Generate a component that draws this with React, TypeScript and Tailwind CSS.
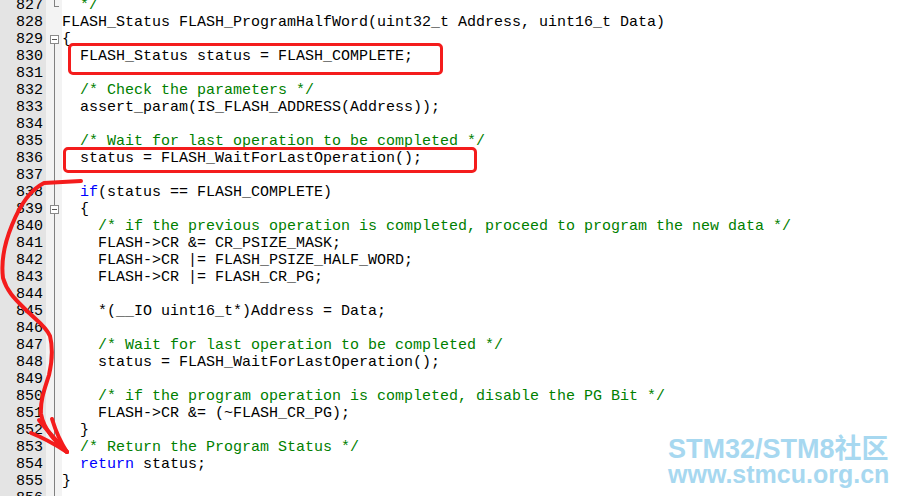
import React from 'react';

type Seg = { t: string; c?: 'k' | 'g' };

const lines: { n: number; segs: Seg[] }[] = [
  { n: 827, segs: [{ t: '  */', c: 'g' }] },
  { n: 828, segs: [{ t: 'FLASH_Status FLASH_ProgramHalfWord(uint32_t Address, uint16_t Data)' }] },
  { n: 829, segs: [{ t: '{' }] },
  { n: 830, segs: [{ t: '  FLASH_Status status = FLASH_COMPLETE;' }] },
  { n: 831, segs: [] },
  { n: 832, segs: [{ t: '  /* Check the parameters */', c: 'g' }] },
  { n: 833, segs: [{ t: '  assert_param(IS_FLASH_ADDRESS(Address));' }] },
  { n: 834, segs: [] },
  { n: 835, segs: [{ t: '  /* Wait for last operation to be completed */', c: 'g' }] },
  { n: 836, segs: [{ t: '  status = FLASH_WaitForLastOperation();' }] },
  { n: 837, segs: [] },
  { n: 838, segs: [{ t: '  ' }, { t: 'if', c: 'k' }, { t: '(status == FLASH_COMPLETE)' }] },
  { n: 839, segs: [{ t: '  {' }] },
  { n: 840, segs: [{ t: '    /* if the previous operation is completed, proceed to program the new data */', c: 'g' }] },
  { n: 841, segs: [{ t: '    FLASH->CR &= CR_PSIZE_MASK;' }] },
  { n: 842, segs: [{ t: '    FLASH->CR |= FLASH_PSIZE_HALF_WORD;' }] },
  { n: 843, segs: [{ t: '    FLASH->CR |= FLASH_CR_PG;' }] },
  { n: 844, segs: [] },
  { n: 845, segs: [{ t: '    *(__IO uint16_t*)Address = Data;' }] },
  { n: 846, segs: [] },
  { n: 847, segs: [{ t: '    /* Wait for last operation to be completed */', c: 'g' }] },
  { n: 848, segs: [{ t: '    status = FLASH_WaitForLastOperation();' }] },
  { n: 849, segs: [] },
  { n: 850, segs: [{ t: '    /* if the program operation is completed, disable the PG Bit */', c: 'g' }] },
  { n: 851, segs: [{ t: '    FLASH->CR &= (~FLASH_CR_PG);' }] },
  { n: 852, segs: [{ t: '  }' }] },
  { n: 853, segs: [{ t: '  /* Return the Program Status */', c: 'g' }] },
  { n: 854, segs: [{ t: '  ' }, { t: 'return', c: 'k' }, { t: ' status;' }] },
  { n: 855, segs: [{ t: '}' }] },
  { n: 856, segs: [] },
];

const FoldBox = () => (
  <div className="relative z-10 flex h-[9px] w-[9px] items-center justify-center border border-[#8a8a8a] bg-white">
    <div className="h-px w-[5px] bg-[#555]" />
  </div>
);

export default function App() {
  return (
    <div
      className="relative h-[496px] w-[900px] overflow-hidden bg-white text-[15px] leading-[17px]"
      style={{ fontFamily: '"Liberation Mono", "DejaVu Sans Mono", monospace' }}
    >
      <div className="-mt-[3px] flex">
        {/* line numbers */}
        <div className="flex w-[46px] flex-col bg-[#e4e4e4] pr-[3px] text-right text-black">
          {lines.map((l) => (
            <div key={l.n} className="h-[17px]">{l.n}</div>
          ))}
        </div>

        {/* fold margin */}
        <div className="relative flex w-[16px] flex-col bg-[#f3f3f3]">
          <div className="absolute bottom-0 left-[8px] top-[47px] w-px bg-[#808080]" />
          <div className="absolute left-[8px] top-0 h-[9px] w-px bg-[#808080]" />
          <div className="absolute left-[8px] top-[9px] h-px w-[5px] bg-[#808080]" />
          {lines.map((l) => (
            <div key={l.n} className="flex h-[17px] items-center pl-[4px]">
              {(l.n === 829 || l.n === 839) && <FoldBox />}
            </div>
          ))}
        </div>

        {/* code */}
        <div className="flex flex-col whitespace-pre text-black">
          {lines.map((l) => (
            <div key={l.n} className="h-[17px]">
              {l.segs.map((s, i) => (
                <span
                  key={i}
                  className={s.c === 'g' ? 'text-[#008000]' : s.c === 'k' ? 'text-[#0000ff]' : 'text-black'}
                >
                  {s.t}
                </span>
              ))}
            </div>
          ))}
        </div>
      </div>

      {/* red annotation boxes */}
      <div className="absolute left-[68px] top-[43px] h-[32px] w-[375px] rounded-[5px] border-[3px] border-[#f41c1c]" />
      <div className="absolute left-[63px] top-[147px] h-[26px] w-[414px] rounded-[5px] border-[3px] border-[#f41c1c]" />

      {/* hand drawn arrow */}
      <svg className="absolute left-0 top-0" width="120" height="496" viewBox="0 0 120 496">
        <g fill="none" stroke="#f41c1c" strokeWidth="4" strokeLinecap="round" strokeLinejoin="round">
          <path d="M81 181 L44 183 C30 190 20 205 12 225 C5 242 1 262 3 278 C7 292 16 300 26 310 C36 320 46 326 50 336 C53 348 52 362 49 375 C45 388 40 400 41 414 C44 430 56 442 67 452" />
          <path d="M31 433 C44 438 56 445 67 452" />
          <path d="M39 420 C48 432 58 442 67 452" />
          <path d="M52 419 C56 432 61 443 67 452" />
        </g>
      </svg>

      {/* watermark */}
      <div
        className="absolute left-[668px] top-[437px] flex flex-col font-bold text-[#a7d8f0]"
        style={{ fontFamily: '"Liberation Sans", "Noto Sans CJK SC", sans-serif' }}
      >
        <div className="h-[25px] text-[27px] leading-[25px]">STM32/STM8社区</div>
        <div className="h-[25px] text-[25px] leading-[25px]">www.stmcu.org.cn</div>
      </div>
    </div>
  );
}
